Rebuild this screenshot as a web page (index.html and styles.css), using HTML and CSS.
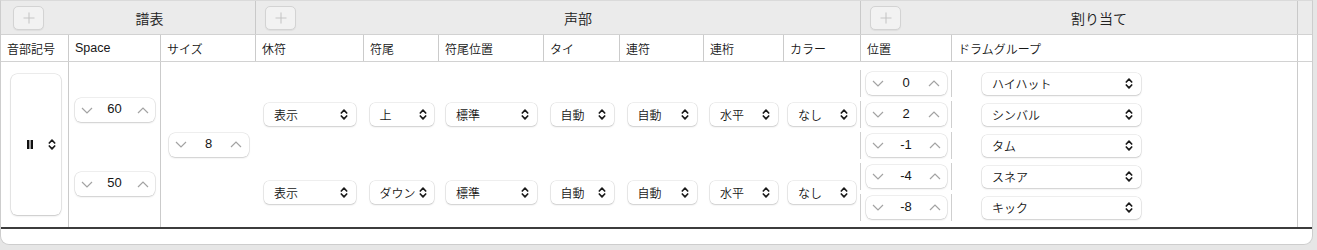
FILE: index.html
```html
<!DOCTYPE html>
<html lang="ja">
<head>
    <meta charset="UTF-8">
    <meta name="viewport" content="width=device-width, initial-scale=1.0">
    <title>ドラムマップ</title>
    <link rel="stylesheet" href="styles.css">
</head>
<body>
    <div class="window">
        <div class="groups">
            <div class="group g-staff">
                <button class="add"><svg viewBox="0 0 12 12"><path d="M6 0.5v11M0.5 6h11"/></svg></button>
                <span class="group-title">譜表</span>
            </div>
            <div class="group g-voice">
                <button class="add"><svg viewBox="0 0 12 12"><path d="M6 0.5v11M0.5 6h11"/></svg></button>
                <span class="group-title">声部</span>
            </div>
            <div class="group g-assign">
                <button class="add"><svg viewBox="0 0 12 12"><path d="M6 0.5v11M0.5 6h11"/></svg></button>
                <span class="group-title">割り当て</span>
            </div>
            <div class="group g-rest"></div>
        </div>

        <div class="heads">
            <div class="head c68">音部記号</div>
            <div class="head c92 latin">Space</div>
            <div class="head c95">サイズ</div>
            <div class="head c108">休符</div>
            <div class="head c75">符尾</div>
            <div class="head c105">符尾位置</div>
            <div class="head c76">タイ</div>
            <div class="head c84">連符</div>
            <div class="head c80">連桁</div>
            <div class="head c77">カラー</div>
            <div class="head c91">位置</div>
            <div class="head c346">ドラムグループ</div>
            <div class="head rest"></div>
        </div>

        <div class="rows">
            <div class="clef-col">
                <div class="clef">
                    <svg class="perc" viewBox="0 0 6 9"><rect x="0" y="0" width="2.4" height="9"/><rect x="3.6" y="0" width="2.4" height="9"/></svg>
                    <svg class="updown" viewBox="0 0 8 13"><path d="M1.3 5L4 2.2 6.7 5M1.3 8L4 10.8 6.7 8"/></svg>
                </div>
            </div>

            <div class="space-col">
                <div class="step w80">
                    <svg class="chev" viewBox="0 0 12 7"><path d="M1 1l5 5 5-5"/></svg>
                    <span>60</span>
                    <svg class="chev" viewBox="0 0 12 7"><path d="M1 6l5-5 5 5"/></svg>
                </div>
                <div class="step w80">
                    <svg class="chev" viewBox="0 0 12 7"><path d="M1 1l5 5 5-5"/></svg>
                    <span>50</span>
                    <svg class="chev" viewBox="0 0 12 7"><path d="M1 6l5-5 5 5"/></svg>
                </div>
            </div>

            <div class="size-col">
                <div class="step w80">
                    <svg class="chev" viewBox="0 0 12 7"><path d="M1 1l5 5 5-5"/></svg>
                    <span>8</span>
                    <svg class="chev" viewBox="0 0 12 7"><path d="M1 6l5-5 5 5"/></svg>
                </div>
            </div>

            <div class="voice-col">
                <div class="voice-row tall">
                    <div class="sel w92"><span>表示</span><svg class="updown" viewBox="0 0 8 13"><path d="M1.3 5L4 2.2 6.7 5M1.3 8L4 10.8 6.7 8"/></svg></div>
                    <div class="sel w64"><span>上</span><svg class="updown" viewBox="0 0 8 13"><path d="M1.3 5L4 2.2 6.7 5M1.3 8L4 10.8 6.7 8"/></svg></div>
                    <div class="sel w91"><span>標準</span><svg class="updown" viewBox="0 0 8 13"><path d="M1.3 5L4 2.2 6.7 5M1.3 8L4 10.8 6.7 8"/></svg></div>
                    <div class="sel w63"><span>自動</span><svg class="updown" viewBox="0 0 8 13"><path d="M1.3 5L4 2.2 6.7 5M1.3 8L4 10.8 6.7 8"/></svg></div>
                    <div class="sel w69"><span>自動</span><svg class="updown" viewBox="0 0 8 13"><path d="M1.3 5L4 2.2 6.7 5M1.3 8L4 10.8 6.7 8"/></svg></div>
                    <div class="sel w68"><span>水平</span><svg class="updown" viewBox="0 0 8 13"><path d="M1.3 5L4 2.2 6.7 5M1.3 8L4 10.8 6.7 8"/></svg></div>
                    <div class="sel w68"><span>なし</span><svg class="updown" viewBox="0 0 8 13"><path d="M1.3 5L4 2.2 6.7 5M1.3 8L4 10.8 6.7 8"/></svg></div>
                </div>
                <div class="voice-row short">
                    <div class="sel w92"><span>表示</span><svg class="updown" viewBox="0 0 8 13"><path d="M1.3 5L4 2.2 6.7 5M1.3 8L4 10.8 6.7 8"/></svg></div>
                    <div class="sel w64"><span>ダウン</span><svg class="updown" viewBox="0 0 8 13"><path d="M1.3 5L4 2.2 6.7 5M1.3 8L4 10.8 6.7 8"/></svg></div>
                    <div class="sel w91"><span>標準</span><svg class="updown" viewBox="0 0 8 13"><path d="M1.3 5L4 2.2 6.7 5M1.3 8L4 10.8 6.7 8"/></svg></div>
                    <div class="sel w63"><span>自動</span><svg class="updown" viewBox="0 0 8 13"><path d="M1.3 5L4 2.2 6.7 5M1.3 8L4 10.8 6.7 8"/></svg></div>
                    <div class="sel w69"><span>自動</span><svg class="updown" viewBox="0 0 8 13"><path d="M1.3 5L4 2.2 6.7 5M1.3 8L4 10.8 6.7 8"/></svg></div>
                    <div class="sel w68"><span>水平</span><svg class="updown" viewBox="0 0 8 13"><path d="M1.3 5L4 2.2 6.7 5M1.3 8L4 10.8 6.7 8"/></svg></div>
                    <div class="sel w68"><span>なし</span><svg class="updown" viewBox="0 0 8 13"><path d="M1.3 5L4 2.2 6.7 5M1.3 8L4 10.8 6.7 8"/></svg></div>
                </div>
            </div>

            <div class="assign-col">
                <div class="assign-row">
                    <div class="pos"><div class="step w81"><svg class="chev" viewBox="0 0 12 7"><path d="M1 1l5 5 5-5"/></svg><span>0</span><svg class="chev" viewBox="0 0 12 7"><path d="M1 6l5-5 5 5"/></svg></div></div>
                    <div class="drum"><div class="sel w159"><span>ハイハット</span><svg class="updown" viewBox="0 0 8 13"><path d="M1.3 5L4 2.2 6.7 5M1.3 8L4 10.8 6.7 8"/></svg></div></div>
                </div>
                <div class="assign-row">
                    <div class="pos"><div class="step w81"><svg class="chev" viewBox="0 0 12 7"><path d="M1 1l5 5 5-5"/></svg><span>2</span><svg class="chev" viewBox="0 0 12 7"><path d="M1 6l5-5 5 5"/></svg></div></div>
                    <div class="drum"><div class="sel w159"><span>シンバル</span><svg class="updown" viewBox="0 0 8 13"><path d="M1.3 5L4 2.2 6.7 5M1.3 8L4 10.8 6.7 8"/></svg></div></div>
                </div>
                <div class="assign-row">
                    <div class="pos"><div class="step w81"><svg class="chev" viewBox="0 0 12 7"><path d="M1 1l5 5 5-5"/></svg><span>-1</span><svg class="chev" viewBox="0 0 12 7"><path d="M1 6l5-5 5 5"/></svg></div></div>
                    <div class="drum"><div class="sel w159"><span>タム</span><svg class="updown" viewBox="0 0 8 13"><path d="M1.3 5L4 2.2 6.7 5M1.3 8L4 10.8 6.7 8"/></svg></div></div>
                </div>
                <div class="assign-row">
                    <div class="pos"><div class="step w81"><svg class="chev" viewBox="0 0 12 7"><path d="M1 1l5 5 5-5"/></svg><span>-4</span><svg class="chev" viewBox="0 0 12 7"><path d="M1 6l5-5 5 5"/></svg></div></div>
                    <div class="drum"><div class="sel w159"><span>スネア</span><svg class="updown" viewBox="0 0 8 13"><path d="M1.3 5L4 2.2 6.7 5M1.3 8L4 10.8 6.7 8"/></svg></div></div>
                </div>
                <div class="assign-row">
                    <div class="pos"><div class="step w81"><svg class="chev" viewBox="0 0 12 7"><path d="M1 1l5 5 5-5"/></svg><span>-8</span><svg class="chev" viewBox="0 0 12 7"><path d="M1 6l5-5 5 5"/></svg></div></div>
                    <div class="drum"><div class="sel w159"><span>キック</span><svg class="updown" viewBox="0 0 8 13"><path d="M1.3 5L4 2.2 6.7 5M1.3 8L4 10.8 6.7 8"/></svg></div></div>
                </div>
            </div>

            <div class="rest-col"></div>
        </div>

        <div class="foot"></div>
    </div>
</body>
</html>
```

FILE: styles.css
```css
* {
    box-sizing: border-box;
}

body {
    margin: 0;
    background-color: #e6e6e6;
    font-family: "Liberation Sans", "Noto Sans CJK JP", sans-serif;
    font-weight: 350;
    color: #161616;
}

.window {
    width: 1313px;
    height: 245px;
    background-color: #fff;
    border: 1px solid #cdcdcd;
    border-top-color: #dadada;
    border-radius: 0 0 9px 9px;
    overflow: hidden;
}

/* top band with the three groups */
.groups {
    display: flex;
    height: 34px;
    background-color: #ebebeb;
    border-bottom: 1px solid #d2d2d2;
}

.group {
    display: flex;
    align-items: center;
    border-right: 1px solid #c9c9c9;
}

.g-staff { width: 255px; }
.g-voice { width: 605px; }
.g-assign { width: 437px; }
.g-rest { flex: 1; border-right: none; }

.add {
    width: 31px;
    height: 24px;
    margin-left: 12px;
    padding: 0;
    display: flex;
    align-items: center;
    justify-content: center;
    background-color: #f2f2f2;
    border: 1px solid #d3d3d3;
    border-radius: 5px;
    box-shadow: 0 1px 1px rgba(0, 0, 0, 0.06);
}

.g-voice .add,
.g-assign .add {
    margin-left: 9px;
}

.add svg {
    width: 12px;
    height: 12px;
    fill: none;
    stroke: #c6c6c6;
    stroke-width: 1.1;
}

.group-title {
    flex: 1;
    text-align: center;
    font-size: 14px;
    color: #222;
}

/* column headers */
.heads {
    display: flex;
    height: 27px;
    border-bottom: 1px solid #d2d2d2;
}

.head {
    display: flex;
    align-items: center;
    padding-left: 6px;
    font-size: 12px;
    border-right: 1px solid #cbcbcb;
}

.head.latin {
    font-weight: 400;
    font-size: 12.5px;
}

.c68 { width: 68px; }
.c92 { width: 92px; }
.c95 { width: 95px; }
.c108 { width: 108px; }
.c75 { width: 75px; }
.c105 { width: 105px; }
.c76 { width: 76px; }
.c84 { width: 84px; }
.c80 { width: 80px; }
.c77 { width: 77px; }
.c91 { width: 91px; }
.c346 { width: 346px; }
.head.rest { flex: 1; border-right: none; }

/* body rows */
.rows {
    display: flex;
    height: 167px;
    border-bottom: 2px solid #3c3c3c;
}

.clef-col {
    width: 68px;
    display: flex;
    align-items: center;
    padding-left: 10px;
    border-right: 1px solid #cbcbcb;
}

.clef {
    width: 50px;
    height: 141px;
    display: flex;
    align-items: center;
    padding-left: 16px;
    border-radius: 6px;
    background-color: #fff;
    box-shadow: 0 0 0 0.5px rgba(0, 0, 0, 0.14), 0 1px 2px rgba(0, 0, 0, 0.16);
}

.perc {
    width: 6px;
    height: 9px;
    fill: #111;
}

.clef .updown {
    margin-left: 15px;
}

.space-col {
    width: 92px;
    display: flex;
    flex-direction: column;
    align-items: center;
    padding-top: 36px;
    gap: 50px;
    border-right: 1px solid #cbcbcb;
}

.size-col {
    width: 95px;
    display: flex;
    align-items: center;
    justify-content: center;
}

.voice-col {
    width: 604px;
    padding-top: 6px;
}

.voice-row {
    display: grid;
    grid-template-columns: 108px 75px 105px 76px 84px 80px 76px;
    align-items: center;
    justify-items: center;
}

.voice-row.tall { height: 93px; }
.voice-row.short { height: 62px; }

.assign-col {
    width: 438px;
    padding-top: 6px;
    border-right: 1px solid #cbcbcb;
}

.assign-row {
    display: flex;
    align-items: center;
    height: 31px;
}

.pos {
    width: 92px;
    height: 27px;
    display: flex;
    align-items: center;
    justify-content: center;
    border-left: 1px solid #cfcfcf;
    border-right: 1px solid #cfcfcf;
}

.drum {
    padding-left: 30px;
}

.rest-col {
    flex: 1;
}

.foot {
    height: 15px;
}

/* popup buttons */
.sel {
    height: 23px;
    display: flex;
    align-items: center;
    justify-content: space-between;
    padding: 0 8px 0 10px;
    font-size: 12px;
    background-color: #fff;
    border-radius: 5px;
    box-shadow: 0 0 0 0.5px rgba(0, 0, 0, 0.13), 0 1px 2px rgba(0, 0, 0, 0.14);
    white-space: nowrap;
}

.assign-row .sel {
    height: 22px;
}

.w92 { width: 92px; }
.w64 { width: 64px; padding-right: 7px; }
.w91 { width: 91px; }
.w63 { width: 63px; }
.w69 { width: 69px; }
.w68 { width: 68px; }
.w159 { width: 159px; }

.updown {
    width: 8px;
    height: 13px;
    flex-shrink: 0;
    fill: none;
    stroke: #1a1a1a;
    stroke-width: 1.7;
    stroke-linecap: round;
    stroke-linejoin: round;
}

/* steppers */
.step {
    height: 24px;
    display: flex;
    align-items: center;
    justify-content: space-between;
    padding: 0 6px;
    font-size: 13px;
    font-weight: 400;
    background-color: #fff;
    border-radius: 6px;
    box-shadow: 0 0 0 0.5px rgba(0, 0, 0, 0.13), 0 1px 2px rgba(0, 0, 0, 0.14);
}

.step span {
    margin-top: -3px;
}

.w80 { width: 80px; }
.w81 { width: 81px; height: 23px; }

.chev {
    width: 12px;
    height: 7px;
    fill: none;
    stroke: #a3a3a3;
    stroke-width: 1.2;
}
```
